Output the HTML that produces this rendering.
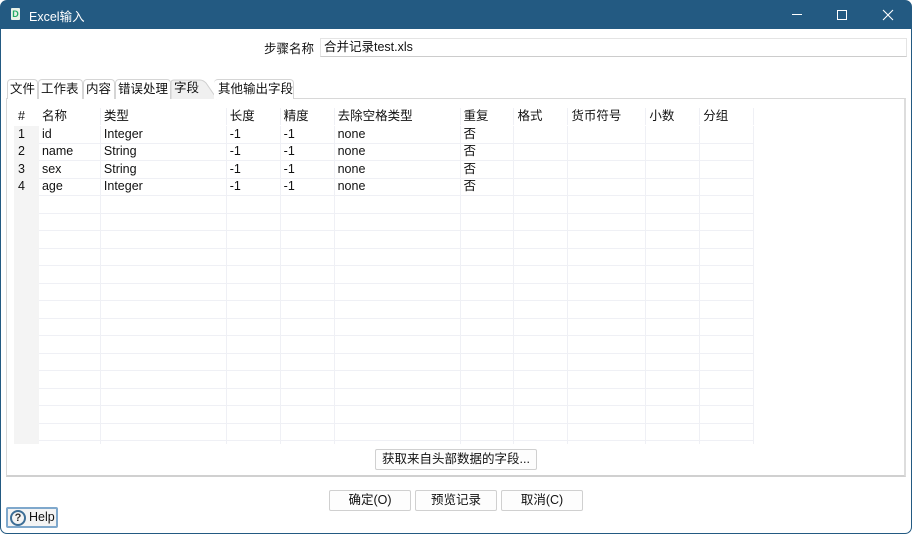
<!DOCTYPE html>
<html><head><meta charset="utf-8"><style>
*{margin:0;padding:0;box-sizing:border-box}
body{width:912px;height:534px;overflow:hidden;background:#fff;font-family:"Liberation Sans","Noto Sans CJK SC",sans-serif;font-size:12px;color:#111;position:relative}
.a{position:absolute}
#title{left:0;top:0;width:912px;height:29px;background:#235a82;color:#fff;border-radius:7px 7px 0 0}
#frame{left:0;top:29px;width:912px;height:505px;border:1px solid #235a82;border-top:none;border-radius:0 0 7px 7px}
.tab{position:absolute;top:79px;height:20px;border:1px solid #d5d5d5;border-bottom:none;border-radius:4px 4px 0 0;padding:0 0 0 2px;font-size:12.5px;line-height:18px;background:#fff;white-space:nowrap;overflow:hidden}
#panel{left:6px;top:98px;width:900px;height:379px;border:1px solid #d8d8d8;border-bottom:2px solid #d0d0d0;border-right:2px solid #ddd}
#grid{left:14px;top:108px;width:890px;height:336px;overflow:hidden}
table{border-collapse:collapse;table-layout:fixed}
td{height:17.5px;border:1px solid #eff0f5;padding:0 0 0 3px;white-space:nowrap;font-size:12.5px;line-height:15px;overflow:hidden}
td:first-child{background:#f4f4f4;border-color:#f4f4f4}
tr:first-child td{border-top:none;border-bottom-color:#fff}
.btn{position:absolute;height:21px;border:1px solid #d0d0d0;border-radius:2px;background:#fdfdfd;text-align:center;line-height:19px;font-size:12.5px;white-space:nowrap}
</style></head><body>
<div id="title" class="a">
 <div class="a" style="left:11px;top:8px;width:9px;height:12px;background:#e8f2e8;border-radius:1px;color:#2a6;font-size:9px;line-height:12px;text-align:center;font-weight:bold">D</div>
 <div class="a" style="left:29px;top:6px;font-size:12.5px">Excel输入</div>
 <div class="a" style="left:792px;top:14px;width:10px;height:1px;background:#fff"></div>
 <div class="a" style="left:837px;top:10px;width:10px;height:10px;border:1px solid #fff"></div>
 <svg class="a" style="left:882px;top:9px" width="12" height="12"><path d="M1 1L11 11M11 1L1 11" stroke="#fff" stroke-width="1.1"/></svg>
</div>
<div id="frame" class="a"></div>
<div class="a" style="left:264px;top:38px;font-size:12.5px">步骤名称</div>
<div class="a" style="left:320px;top:38px;width:587px;height:19px;border:1px solid #e4e4e4;border-bottom-color:#ccc;padding:0 0 0 3px;line-height:16px;font-size:12.5px">合并记录test.xls</div>
<div id="panel" class="a"></div>
<div class="tab" style="left:7px;width:31px">文件</div>
<div class="tab" style="left:38px;width:45px">工作表</div>
<div class="tab" style="left:83px;width:32px">内容</div>
<div class="tab" style="left:115px;width:56px">错误处理</div>
<svg class="a" style="left:170px;top:79px" width="48" height="21"><path d="M1 20V4Q1 1 4 1H30Q33 1 36 4L47 20" fill="#f0f0f0" stroke="#d0d0d0"/></svg>
<div class="a" style="left:174px;top:79px;font-size:12.5px;line-height:18px">字段</div>
<div class="tab" style="left:214px;width:80px;border-left:none;padding-left:4px">其他输出字段</div>
<div id="grid" class="a"><table>
<colgroup><col style="width:24px"><col style="width:62px"><col style="width:126px"><col style="width:54px"><col style="width:54px"><col style="width:126px"><col style="width:54px"><col style="width:54px"><col style="width:78px"><col style="width:54px"><col style="width:54px"><col style="width:150px"></colgroup>
<tr><td style="background:#fff;border-color:#fff">#</td><td>名称</td><td>类型</td><td>长度</td><td>精度</td><td>去除空格类型</td><td>重复</td><td>格式</td><td>货币符号</td><td>小数</td><td>分组</td><td style="border:none"></td></tr>
<tr><td>1</td><td>id</td><td>Integer</td><td>-1</td><td>-1</td><td>none</td><td>否</td><td></td><td></td><td></td><td></td><td style="border:none"></td></tr>
<tr><td>2</td><td>name</td><td>String</td><td>-1</td><td>-1</td><td>none</td><td>否</td><td></td><td></td><td></td><td></td><td style="border:none"></td></tr>
<tr><td>3</td><td>sex</td><td>String</td><td>-1</td><td>-1</td><td>none</td><td>否</td><td></td><td></td><td></td><td></td><td style="border:none"></td></tr>
<tr><td>4</td><td>age</td><td>Integer</td><td>-1</td><td>-1</td><td>none</td><td>否</td><td></td><td></td><td></td><td></td><td style="border:none"></td></tr>
<tr><td></td><td></td><td></td><td></td><td></td><td></td><td></td><td></td><td></td><td></td><td></td><td style="border:none"></td></tr>
<tr><td></td><td></td><td></td><td></td><td></td><td></td><td></td><td></td><td></td><td></td><td></td><td style="border:none"></td></tr>
<tr><td></td><td></td><td></td><td></td><td></td><td></td><td></td><td></td><td></td><td></td><td></td><td style="border:none"></td></tr>
<tr><td></td><td></td><td></td><td></td><td></td><td></td><td></td><td></td><td></td><td></td><td></td><td style="border:none"></td></tr>
<tr><td></td><td></td><td></td><td></td><td></td><td></td><td></td><td></td><td></td><td></td><td></td><td style="border:none"></td></tr>
<tr><td></td><td></td><td></td><td></td><td></td><td></td><td></td><td></td><td></td><td></td><td></td><td style="border:none"></td></tr>
<tr><td></td><td></td><td></td><td></td><td></td><td></td><td></td><td></td><td></td><td></td><td></td><td style="border:none"></td></tr>
<tr><td></td><td></td><td></td><td></td><td></td><td></td><td></td><td></td><td></td><td></td><td></td><td style="border:none"></td></tr>
<tr><td></td><td></td><td></td><td></td><td></td><td></td><td></td><td></td><td></td><td></td><td></td><td style="border:none"></td></tr>
<tr><td></td><td></td><td></td><td></td><td></td><td></td><td></td><td></td><td></td><td></td><td></td><td style="border:none"></td></tr>
<tr><td></td><td></td><td></td><td></td><td></td><td></td><td></td><td></td><td></td><td></td><td></td><td style="border:none"></td></tr>
<tr><td></td><td></td><td></td><td></td><td></td><td></td><td></td><td></td><td></td><td></td><td></td><td style="border:none"></td></tr>
<tr><td></td><td></td><td></td><td></td><td></td><td></td><td></td><td></td><td></td><td></td><td></td><td style="border:none"></td></tr>
<tr><td></td><td></td><td></td><td></td><td></td><td></td><td></td><td></td><td></td><td></td><td></td><td style="border:none"></td></tr>
<tr><td></td><td></td><td></td><td></td><td></td><td></td><td></td><td></td><td></td><td></td><td></td><td style="border:none"></td></tr>
</table></div>
<div class="btn" style="left:375px;top:449px;width:162px">获取来自头部数据的字段...</div>
<div class="btn" style="left:329px;top:490px;width:82px">确定(O)</div>
<div class="btn" style="left:415px;top:490px;width:82px">预览记录</div>
<div class="btn" style="left:501px;top:490px;width:82px">取消(C)</div>
<div class="a" style="left:6px;top:507px;width:52px;height:21px;border:2px solid #7fa8cc;border-radius:2px;background:#f4f4f4"></div>
<div class="a" style="left:10px;top:510px;width:16px;height:16px;border:2px solid #3d6e96;border-radius:50%;text-align:center;font-size:11px;line-height:12px;font-weight:bold;color:#333">?</div>
<div class="a" style="left:29px;top:510px;font-size:12.5px">Help</div>
</body></html>
